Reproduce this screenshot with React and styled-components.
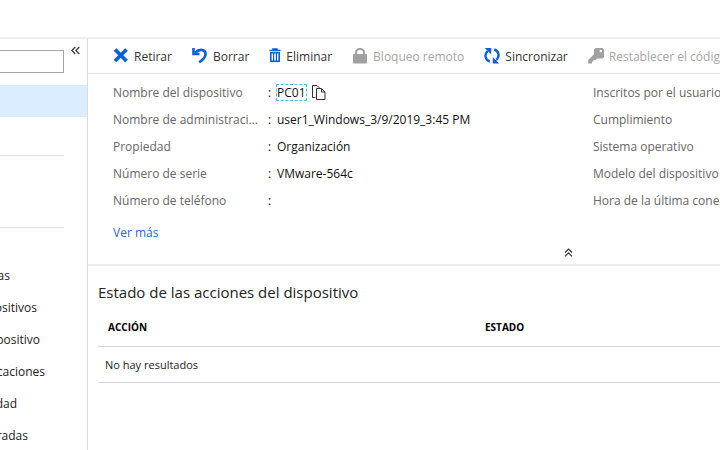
import React from "react";
import styled, { createGlobalStyle } from "styled-components";

const GlobalStyle = createGlobalStyle`
  * {
    box-sizing: border-box;
  }

  body {
    margin: 0;
    background: #ffffff;
    color: #222222;
    font-family: "Open Sans", "Noto Sans", sans-serif;
    font-size: 12px;
    line-height: 20px;
    overflow: hidden;
  }

  button,
  input {
    font: inherit;
  }
`;

const Page = styled.div`
  display: flex;
  flex-direction: column;
  min-height: 100vh;
`;

const TopBar = styled.header`
  height: 39px;
  border-bottom: 2px solid #ededed;
`;

const Body = styled.div`
  display: flex;
  flex: 1;
`;

/* Sidebar */
const Sidebar = styled.aside`
  flex: 0 0 88px;
  border-right: 1px solid #dcdcdc;
  overflow: hidden;
`;

const SearchRow = styled.div`
  display: flex;
  align-items: flex-start;
  gap: 7px;
  padding: 11px 7px 0 0;
  height: 46px;
`;

const SearchInput = styled.input`
  flex: 1;
  min-width: 0;
  height: 23px;
  padding: 0 8px;
  border: 1px solid #a6a6a6;
  border-left: 0;
  border-radius: 0;
  background: #ffffff;
`;

const IconButton = styled.button`
  display: flex;
  padding: 0;
  border: 0;
  background: none;
  color: #333333;
  cursor: pointer;
`;

const CollapseButton = styled(IconButton)`
  margin-top: -4px;
`;

const SelectedItem = styled.a`
  display: block;
  height: 32px;
  background: #dbeeff;
`;

const SectionSpace = styled.div`
  height: ${(props) => props.$height}px;
  margin-right: 23px;
  border-bottom: 1px solid #dcdcdc;
`;

const MenuList = styled.ul`
  list-style: none;
  margin: 0;
  padding: 32px 0 0;
`;

const MenuLink = styled.a`
  display: flex;
  justify-content: flex-end;
  align-items: center;
  width: ${(props) => props.$end}px;
  height: 32px;
  color: #222222;
  text-decoration: none;
  white-space: nowrap;
`;

/* Main */
const Main = styled.main`
  flex: 1;
  min-width: 0;
  overflow: hidden;
`;

const Toolbar = styled.div`
  display: flex;
  align-items: center;
  gap: 20px;
  height: 35px;
  padding: 2px 0 0 25px;
  border-bottom: 1px solid #e3e3e3;
`;

const ToolButton = styled.button`
  display: flex;
  flex: none;
  align-items: center;
  gap: 5px;
  padding: 0;
  border: 0;
  background: none;
  color: #333333;
  white-space: nowrap;
  cursor: pointer;

  svg {
    margin-bottom: 2px;
    color: #0a5fdc;
  }

  &:disabled {
    color: #a6a6a6;
    cursor: default;
  }

  &:disabled svg {
    color: #a0a0a0;
  }
`;

const Essentials = styled.section`
  border-bottom: 2px solid #ededed;
`;

const Columns = styled.div`
  display: grid;
  grid-template-columns: 480px 1fr;
  padding: 5px 0 0 25px;
`;

const Fields = styled.dl`
  margin: 0;
`;

const Field = styled.div`
  display: flex;
  align-items: center;
  height: 27px;
  white-space: nowrap;
`;

const FieldName = styled.dt`
  width: 155px;
  color: #666666;
`;

const FieldValue = styled.dd`
  display: flex;
  align-items: center;
  gap: 6px;
  margin: 0;
  color: #111111;

  &::before {
    content: ":";
    width: 3px;
  }
`;

const Marked = styled.span`
  line-height: 15px;
  outline: 1px dashed #4fc3e8;
`;

const MoreLink = styled.a`
  display: inline-block;
  margin: 9px 0 0 25px;
  color: #2468dc;
  text-decoration: none;
`;

const CollapseRow = styled.div`
  display: flex;
  justify-content: center;
  height: 21px;
  padding: 5px 0 0 328px;
`;

const Actions = styled.section`
  padding: 15px 0 0 10px;
`;

const Title = styled.h2`
  margin: 0;
  font-size: 15px;
  font-weight: 400;
  line-height: 22px;
`;

const Table = styled.table`
  width: 100%;
  margin-top: 4px;
  border-collapse: collapse;
  table-layout: fixed;
  text-align: left;

  tr {
    height: 36px;
    border-bottom: 1px solid #d6d6d6;
  }

  thead tr {
    height: 39px;
  }

  th {
    padding: 2px 10px 0;
    color: #000000;
    font-size: 10px;
    font-weight: 700;
  }

  th:first-child {
    width: 377px;
  }

  td {
    padding: 2px 7px 0;
    font-size: 11px;
  }
`;

const RemoveIcon = () => (
  <svg width="16" height="16" viewBox="0 0 16 16" fill="none" stroke="currentColor" strokeWidth="3.8">
    <path d="M2 1.500l11.500 11.500M13.500 1.500L2 13" />
  </svg>
);

const UndoIcon = () => (
  <svg width="16" height="16" viewBox="0 0 16 16" fill="none" stroke="currentColor">
    <path d="M3 4.800C7.500 .3 13.600 1.200 13.600 6.200c0 3.200-2.600 5.400-6.400 8.200" strokeWidth="2.600" />
    <path d="M1.500 0v6h6" strokeWidth="2.600" />
  </svg>
);

const TrashIcon = () => (
  <svg width="12" height="16" viewBox="0 0 12 16" fill="none" stroke="currentColor">
    <path d="M.5 2.500h11M4 2V.9h4V2" strokeWidth="1.500" />
    <path d="M1.800 4.700v8.600h8.400V4.700z" strokeWidth="1.600" />
    <path d="M4.600 5v8.500M7.400 5v8.500" strokeWidth="1.200" />
  </svg>
);

const LockIcon = () => (
  <svg width="16" height="16" viewBox="0 0 16 16">
    <rect x="1" y="6" width="14" height="9.500" rx="1" fill="currentColor" />
    <path d="M4 7V4.500a4 3.500 0 0 1 8 0V7" fill="none" stroke="currentColor" strokeWidth="2.200" />
  </svg>
);

const SyncIcon = () => (
  <svg width="16" height="16" viewBox="0 0 16 16">
    <g fill="none" stroke="currentColor" strokeWidth="2.400">
      <path d="M5.800 13.500A6 6 0 0 1 3.800 3" />
      <path d="M10.200 1.500a6 6 0 0 1 2 10.500" />
    </g>
    <path d="M.8 0h6.400v6.200zM15.200 15.400H8.800V9.200z" fill="currentColor" />
  </svg>
);

const KeyIcon = () => (
  <svg width="16" height="16" viewBox="0 0 16 16">
    <path
      d="M7.500 0h7L16 1.500v7.500l-1.500 1.500H9L7.500 12H5.500v1.500H4v2H.3V12L6 6.200V1.500zM11.700 2v2.300H14V2z"
      fill="currentColor"
      fillRule="evenodd"
    />
  </svg>
);

const CopyIcon = () => (
  <svg width="14" height="16" viewBox="0 0 14 16" fill="none" stroke="#333333">
    <path d="M3.500 12.500h-3v-12h4.500l2.500 2.500" />
    <path d="M4.500 3.500h5l3.500 3.500v7.500h-8.500z" fill="#ffffff" />
    <path d="M9.500 3.500v3.500h3.500" />
  </svg>
);

const DoubleChevron = ({ up }) => (
  <svg width="9" height="9" viewBox="0 0 9 9" fill="none" stroke="currentColor" strokeWidth="1.200">
    {up ? (
      <path d="M1 4.500L4.500 1 8 4.500M1 8.300l3.500-3.500L8 8.300" />
    ) : (
      <path d="M4.300 1L.9 4.500l3.400 3.500M8.300 1L4.900 4.500l3.400 3.500" />
    )}
  </svg>
);

const tools = [
  { name: "Retirar", icon: RemoveIcon },
  { name: "Borrar", icon: UndoIcon },
  { name: "Eliminar", icon: TrashIcon },
  { name: "Bloqueo remoto", icon: LockIcon, disabled: true },
  { name: "Sincronizar", icon: SyncIcon },
  { name: "Restablecer el código", icon: KeyIcon, disabled: true },
];

const menus = [
  { name: "as", end: 10 },
  { name: "ositivos", end: 37 },
  { name: "positivo", end: 40 },
  { name: "caciones", end: 45 },
  { name: "dad", end: 17 },
  { name: "radas", end: 28 },
];

const fields = [
  { name: "Nombre del dispositivo", value: "PC01", copy: true },
  { name: "Nombre de administraci...", value: "user1_Windows_3/9/2019_3:45 PM" },
  { name: "Propiedad", value: "Organización" },
  { name: "Número de serie", value: "VMware-564c" },
  { name: "Número de teléfono", value: "" },
];

const moreFields = [
  "Inscritos por el usuario",
  "Cumplimiento",
  "Sistema operativo",
  "Modelo del dispositivo",
  "Hora de la última conexión",
];

const App = () => (
  <>
    <GlobalStyle />
    <Page>
      <TopBar />
      <Body>
        <Sidebar>
          <SearchRow>
            <SearchInput type="text" aria-label="Buscar" />
            <CollapseButton type="button" aria-label="Contraer menú">
              <DoubleChevron />
            </CollapseButton>
          </SearchRow>
          <nav>
            <SelectedItem href="#general" aria-label="Información general" />
            <SectionSpace $height={39} />
            <SectionSpace $height={72} />
            <MenuList>
              {menus.map((menu) => (
                <li key={menu.name}>
                  <MenuLink href="#menu" $end={menu.end}>
                    {menu.name}
                  </MenuLink>
                </li>
              ))}
            </MenuList>
          </nav>
        </Sidebar>
        <Main>
          <Toolbar>
            {tools.map((tool) => (
              <ToolButton key={tool.name} type="button" disabled={tool.disabled}>
                <tool.icon />
                {tool.name}
              </ToolButton>
            ))}
          </Toolbar>
          <Essentials>
            <Columns>
              <Fields>
                {fields.map((field) => (
                  <Field key={field.name}>
                    <FieldName>{field.name}</FieldName>
                    <FieldValue>
                      {field.copy ? <Marked>{field.value}</Marked> : field.value}
                      {field.copy && (
                        <IconButton type="button" aria-label="Copiar">
                          <CopyIcon />
                        </IconButton>
                      )}
                    </FieldValue>
                  </Field>
                ))}
              </Fields>
              <Fields>
                {moreFields.map((name) => (
                  <Field key={name}>
                    <FieldName>{name}</FieldName>
                  </Field>
                ))}
              </Fields>
            </Columns>
            <MoreLink href="#mas">Ver más</MoreLink>
            <CollapseRow>
              <IconButton type="button" aria-label="Contraer">
                <DoubleChevron up />
              </IconButton>
            </CollapseRow>
          </Essentials>
          <Actions>
            <Title>Estado de las acciones del dispositivo</Title>
            <Table>
              <thead>
                <tr>
                  <th>ACCIÓN</th>
                  <th>ESTADO</th>
                </tr>
              </thead>
              <tbody>
                <tr>
                  <td colSpan={2}>No hay resultados</td>
                </tr>
              </tbody>
            </Table>
          </Actions>
        </Main>
      </Body>
    </Page>
  </>
);

export default App;
